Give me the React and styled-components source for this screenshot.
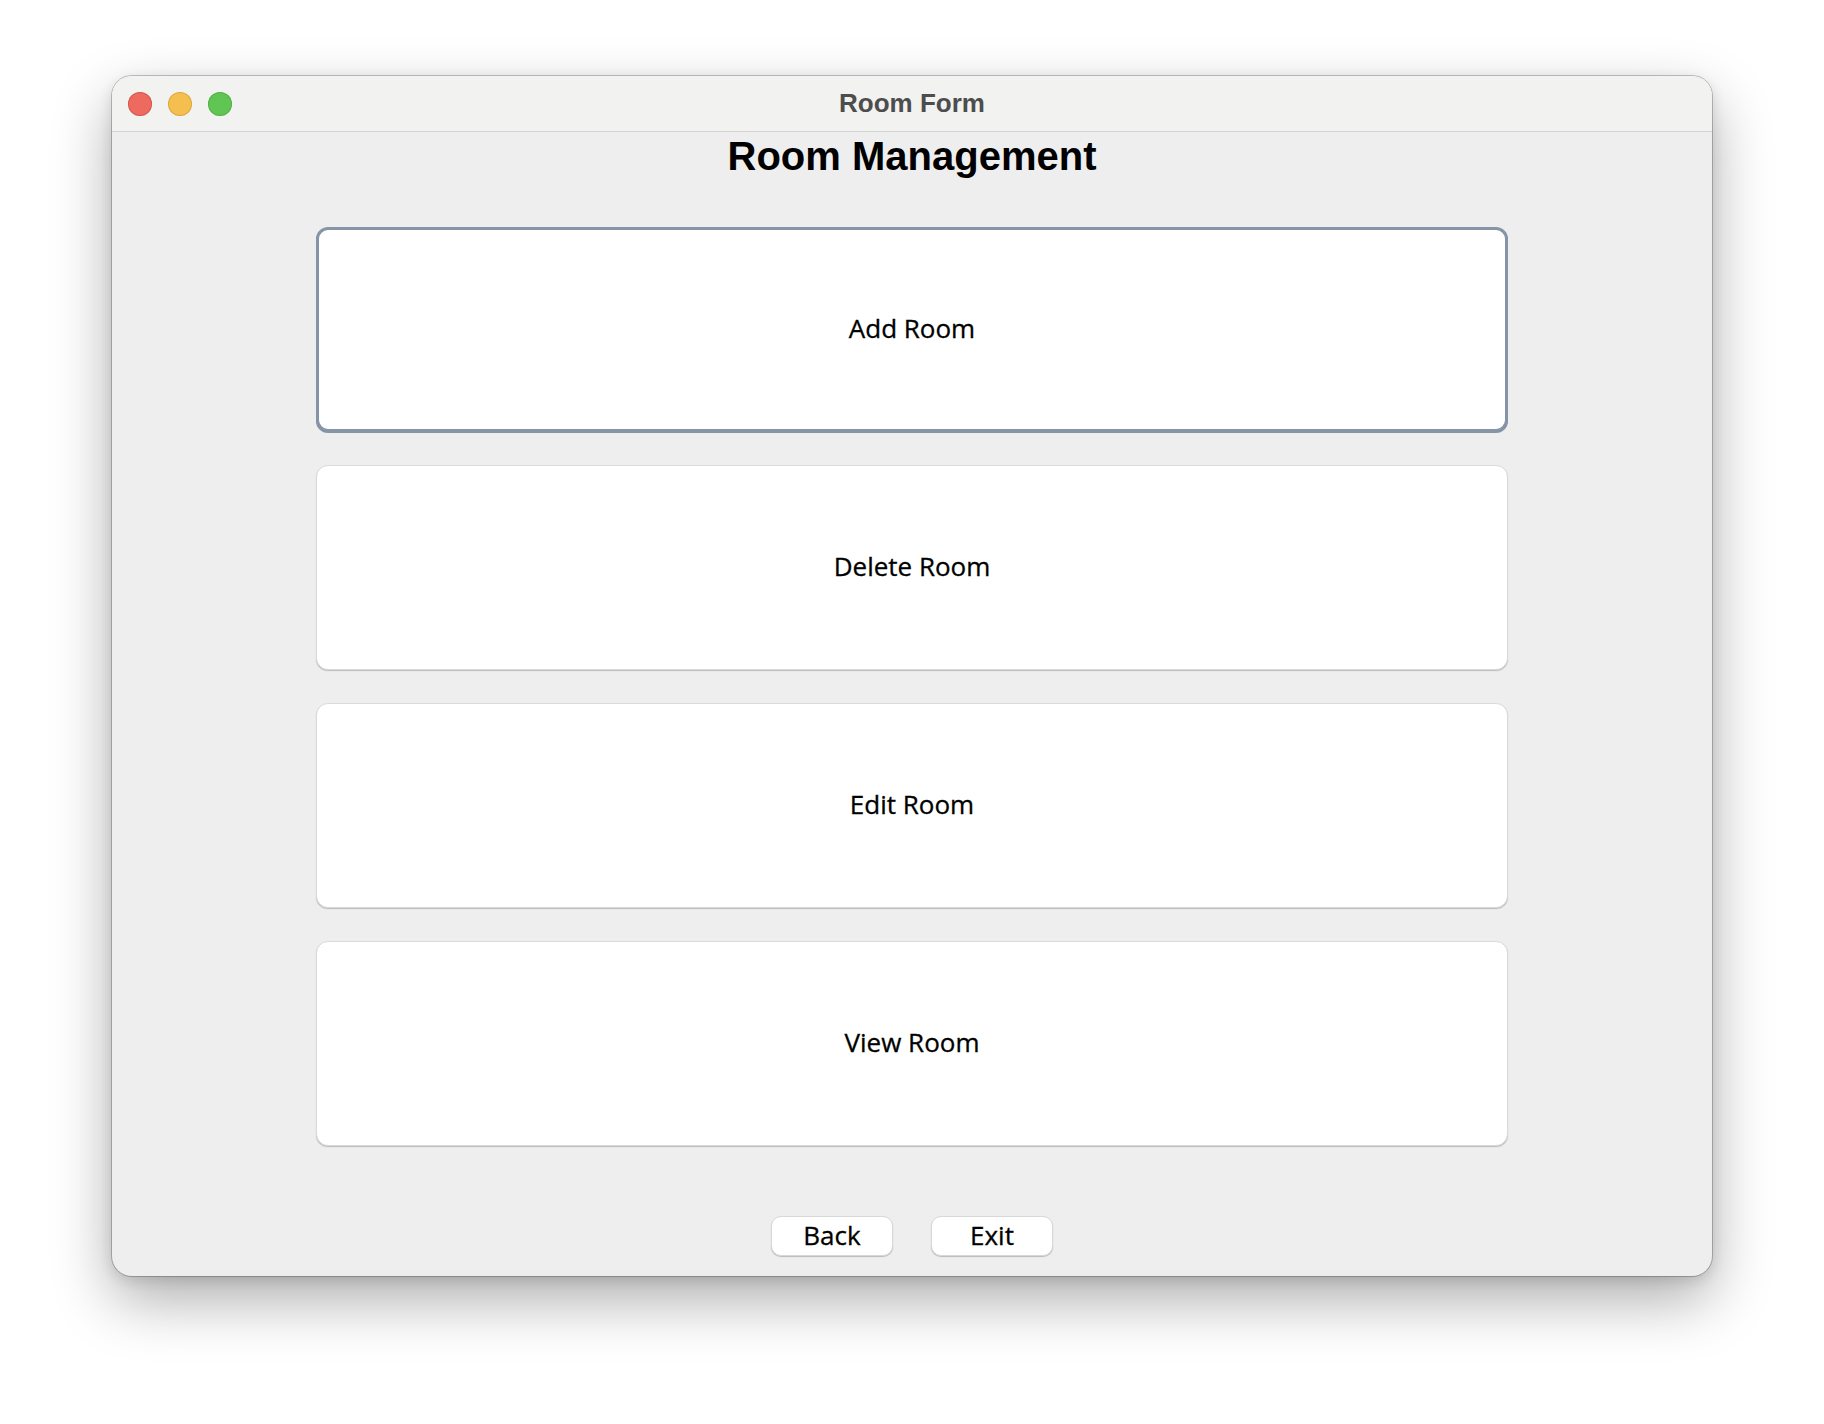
import React from "react";
import styled, { createGlobalStyle } from "styled-components";

const GlobalStyle = createGlobalStyle`
  html, body {
    margin: 0;
    padding: 0;
    background: #ffffff;
  }
  * { box-sizing: border-box; }
`;

const Stage = styled.div`
  width: 1824px;
  height: 1424px;
  padding: 76px 112px;
  background: #ffffff;
`;

const Window = styled.div`
  width: 1600px;
  height: 1200px;
  border-radius: 20px;
  overflow: hidden;
  display: flex;
  flex-direction: column;
  background: #eeeeee;
  box-shadow: 0 0 0 1px rgba(0, 0, 0, 0.22), 0 24px 60px rgba(0, 0, 0, 0.32),
    0 4px 14px rgba(0, 0, 0, 0.12);
`;

const TitleBar = styled.div`
  position: relative;
  height: 56px;
  flex: none;
  display: flex;
  align-items: center;
  padding: 0 16px;
  gap: 16px;
  background: #f2f2f1;
  border-bottom: 1px solid #d3d3d3;
`;

const Light = styled.span`
  width: 24px;
  height: 24px;
  border-radius: 50%;
  background: ${(p) => p.$fill};
  box-shadow: inset 0 0 0 1px ${(p) => p.$edge};
`;

const WindowTitle = styled.div`
  position: absolute;
  left: 0;
  right: 0;
  top: 0;
  bottom: 0;
  display: flex;
  align-items: center;
  justify-content: center;
  font-family: "Liberation Sans", Arial, sans-serif;
  font-weight: 700;
  font-size: 26px;
  color: #4d4d4d;
  pointer-events: none;
`;

const Content = styled.div`
  flex: 1;
  display: flex;
  flex-direction: column;
  align-items: center;
  padding-top: 1px;
`;

const Heading = styled.h1`
  margin: 0;
  font-family: "Liberation Sans", Arial, sans-serif;
  font-weight: 700;
  font-size: 40px;
  line-height: 46px;
  color: #000000;
`;

const ActionList = styled.div`
  margin-top: 48px;
  width: 1192px;
  display: flex;
  flex-direction: column;
  gap: 33px;
`;

const ActionButton = styled.button`
  height: 205px;
  width: 100%;
  background: #ffffff;
  border-radius: 12px;
  border: ${(p) => (p.$focused ? "3px solid #8694a8" : "1px solid #dadada")};
  box-shadow: ${(p) =>
    p.$focused ? "0 1px 0 0 #8694a8" : "0 1px 1px rgba(0,0,0,0.22)"};
  font-family: "Open Sans", "DejaVu Sans", sans-serif;
  font-size: 26px;
  line-height: 1;
  -webkit-text-stroke: 0.3px #000;
  color: #000000;
  display: flex;
  align-items: center;
  justify-content: center;
  padding: 0 0 4px;
  cursor: pointer;
  outline: none;
`;

const FooterRow = styled.div`
  margin-top: 70px;
  display: flex;
  gap: 38px;
`;

const SmallButton = styled.button`
  width: 122px;
  height: 40px;
  background: #ffffff;
  border: 1px solid #d8d8d8;
  border-radius: 10px;
  box-shadow: 0 1px 1px rgba(0, 0, 0, 0.22);
  font-family: "Open Sans", "DejaVu Sans", sans-serif;
  font-size: 26px;
  line-height: 1;
  -webkit-text-stroke: 0.3px #000;
  color: #000000;
  display: flex;
  align-items: center;
  justify-content: center;
  padding: 0 0 3px;
  cursor: pointer;
`;

const actions = ["Add Room", "Delete Room", "Edit Room", "View Room"];

export default function App() {
  return (
    <>
      <GlobalStyle />
      <Stage>
        <Window>
          <TitleBar>
            <Light $fill="#ee6a5f" $edge="rgba(180,60,50,0.45)" />
            <Light $fill="#f5bf4f" $edge="rgba(190,140,40,0.45)" />
            <Light $fill="#61c554" $edge="rgba(60,150,50,0.45)" />
            <WindowTitle>Room Form</WindowTitle>
          </TitleBar>
          <Content>
            <Heading>Room Management</Heading>
            <ActionList>
              {actions.map((a, i) => (
                <ActionButton key={a} $focused={i === 0}>
                  {a}
                </ActionButton>
              ))}
            </ActionList>
            <FooterRow>
              <SmallButton>Back</SmallButton>
              <SmallButton>Exit</SmallButton>
            </FooterRow>
          </Content>
        </Window>
      </Stage>
    </>
  );
}
